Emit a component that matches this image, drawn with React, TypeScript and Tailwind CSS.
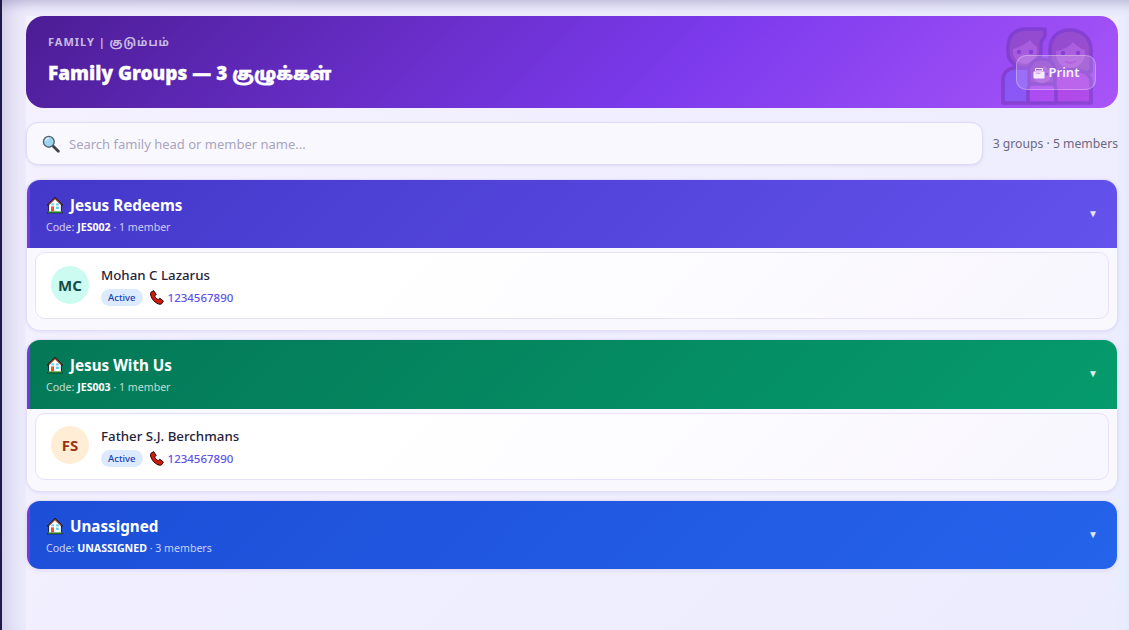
const font = { fontFamily: '"Noto Sans", "Noto Sans Tamil", sans-serif' };

function House() {
  return (
    <svg width="18" height="18" viewBox="0 0 18 18" className="shrink-0">
      <path d="M9 .8 L17.4 9.2 L15.6 9.6 L15.6 16 L16.8 16 L16.8 17.2 L1.2 17.2 L1.2 16 L2.4 16 L2.4 9.6 L.6 9.2 Z" fill="#17100e" />
      <path d="M9 1.9 L16 8.7 L14.8 8.8 L9 3.4 L3.2 8.8 L2 8.7 Z" fill="#c4502c" />
      <path d="M9 3.6 L14.9 9 L14.9 15.7 L3.1 15.7 L3.1 9 Z" fill="#ffffff" />
      <rect x="1.8" y="15.5" width="14.4" height="1.1" fill="#37b337" />
      <rect x="5" y="10.4" width="3" height="5.1" fill="#ee5430" />
      <rect x="5.4" y="7.4" width="2.6" height="2" fill="#63d3f5" />
      <rect x="10" y="7.4" width="2.8" height="2" fill="#63d3f5" />
      <rect x="10" y="10.6" width="2.8" height="2.4" fill="#63d3f5" />
    </svg>
  );
}

function Phone() {
  return (
    <svg width="14" height="15" viewBox="0 0 14 15" className="shrink-0">
      <path
        d="M.8 2.4 L3.6 .6 L6.2 4.4 L4.6 6 C5.4 7.8 6.6 9 8.2 9.6 L9.8 8.2 L13.4 11 L11.6 13.8 C10.8 14.4 9.4 14.4 8 13.8 C4.2 12.2 1.6 9 .6 5 C.4 4 .4 3 .8 2.4 Z"
        fill="#d3180c"
        stroke="#2a0808"
        strokeWidth="1"
        strokeLinejoin="round"
      />
    </svg>
  );
}

function Lens() {
  return (
    <svg width="18" height="18" viewBox="0 0 18 18" className="shrink-0">
      <line x1="10.5" y1="10.5" x2="16.3" y2="16.3" stroke="#3d4347" strokeWidth="2.8" strokeLinecap="round" />
      <circle cx="6.8" cy="6.8" r="5.4" fill="#9fd3f2" stroke="#56666f" strokeWidth="1.4" />
      <path d="M3.6 6 A3.6 3.6 0 0 1 7 3" fill="none" stroke="#e3f5ff" strokeWidth="1.2" />
    </svg>
  );
}

function Printer() {
  return (
    <svg width="12" height="11" viewBox="0 0 12 11" className="shrink-0">
      <path d="M2.5 .5 H9.5 V3 H2.5 Z" fill="none" stroke="#f3e4ff" strokeWidth="1" />
      <rect x=".5" y="3.5" width="11" height="7" rx="1" fill="#f6ecff" />
      <rect x="2.5" y="4.6" width="5" height="1.2" fill="#c99cf0" />
    </svg>
  );
}

function Family() {
  return (
    <svg width="96" height="84" viewBox="0 0 96 84" className="opacity-[0.18]">
      <g stroke="#200a3c" strokeWidth="3.6" strokeLinejoin="round">
        {/* man */}
        <path d="M3 81 V58 C3 50 9 46 15 46 H32 V81 Z" fill="#3b82f6" />
        <path d="M8 26 C8 14 14 7 26 7 H45 V14 L41 20 V30 C41 38 34 46 25 46 C15 46 8 38 8 30 Z" fill="#7a4a2a" />
        <path d="M13 27 C20 25 26 22 30 18 C33 22 36 24 37 25 V30 C37 36 31 42 25 42 C18 42 13 36 13 30 Z" fill="#e5a47c" stroke="none" />
        {/* woman */}
        <path d="M50 28 C50 15 58 8 70 8 C82 8 91 16 91 28 V50 H50 Z" fill="#7a4a2a" />
        <path d="M56 29 C64 28 70 24 73 20 C77 24 81 27 85 28 V32 C85 40 78 46 70 46 C62 46 56 40 56 32 Z" fill="#e5a47c" stroke="none" />
        <path d="M50 81 V60 C50 52 58 48 70 48 C84 48 91 52 91 60 V81 Z" fill="#ec2fb0" />
        {/* girl */}
        <path d="M28 81 V68 C28 62 34 59 42 59 C50 59 56 62 56 68 V81 Z" fill="#e83fe0" />
        <path d="M29 50 C29 42 34 37 42 37 C50 37 55 42 55 50 V62 H29 Z" fill="#7a4a2a" />
        <path d="M33 50 C38 49 42 47 44 44 C47 47 49 49 51 49 V52 C51 58 47 61 42 61 C37 61 33 58 33 52 Z" fill="#e5a47c" stroke="none" />
      </g>
      <g fill="#200a3c">
        <circle cx="19" cy="30" r="2.2" />
        <circle cx="31" cy="30" r="2.2" />
        <circle cx="63" cy="31" r="2.2" />
        <circle cx="78" cy="31" r="2.2" />
        <circle cx="37" cy="52" r="1.6" />
        <circle cx="47" cy="52" r="1.6" />
      </g>
      <path d="M65 39 Q70.500 43 76 39" fill="none" stroke="#e0246e" strokeWidth="2" />
    </svg>
  );
}

type Member = { initials: string; name: string; avatar: string; color: string };

function GroupCard({
  title,
  code,
  count,
  header,
  member,
}: {
  title: string;
  code: string;
  count: string;
  header: string;
  member?: Member;
}) {
  return (
    <div className="mx-[1px] rounded-[13px] bg-[#faf8ff] shadow-[0_0_0_1px_#e4def8,0_1px_4px_rgba(90,70,180,0.16)] overflow-hidden">
      <div className={`h-[68.4px] border-l-[3px] border-l-[#6d3be0] ${header} pl-[16px] pr-[19px] pt-[14px] flex justify-between`}>
        <div>
          <div className="flex items-center gap-[6px] h-[22px] text-white text-[15.2px] font-bold leading-[22px]">
            <House />
            <span>{title}</span>
          </div>
          <div className="mt-[3px] text-[10.6px] leading-[16px] text-white/75">
            Code: <b className="text-white font-bold">{code}</b> · {count}
          </div>
        </div>
        <div className="text-[10px] text-white/85 mt-[12px]">▼</div>
      </div>
      {member && (
        <div className="px-[8px] pt-[4px] pb-[11px]">
          <div className="h-[67px] rounded-[10px] border border-[#e7e1fb] bg-[linear-gradient(135deg,#ffffff_30%,#f8f6fe)] flex items-center pl-[15px] gap-[12px]">
            <div className={`w-[38px] h-[38px] mb-[2px] rounded-full flex items-center justify-center text-[15px] font-bold ${member.avatar} ${member.color}`}>
              {member.initials}
            </div>
            <div>
              <div className="text-[13.3px] font-medium leading-[20px] text-[#26233a]">{member.name}</div>
              <div className="flex items-center gap-[7px] mt-[4px]">
                <span className="h-[17px] px-[7px] rounded-full bg-[#dbeafe] text-[#1e40af] text-[9.5px] font-medium leading-[17px]">Active</span>
                <Phone />
                <span className="text-[11.5px] font-medium text-[#6152ea] -ml-[3px]">1234567890</span>
              </div>
            </div>
          </div>
        </div>
      )}
    </div>
  );
}

export default function App() {
  return (
    <div
      style={font}
      className="h-[630px] w-[1129px] overflow-hidden flex bg-[linear-gradient(135deg,#f0ecfd,#e8edfe)] shadow-[inset_0_12px_12px_-8px_rgba(60,55,120,0.28),inset_26px_0_22px_-18px_rgba(60,50,130,0.18)]"
    >
      <div className="w-[2px] bg-[#1e1b4b] shrink-0" />
      <div className="flex-1 pl-[24px] pr-[11px] pt-[16px] flex">
        <main className="flex-1 flex flex-col bg-[linear-gradient(135deg,#f5f1ff,#ebecfe)]">
          <div className="relative h-[92px] shrink-0 rounded-[18px] bg-[linear-gradient(135deg,#4c1d95,#7c3aed_60%,#a855f7)] px-[22px] pt-[19px] overflow-hidden">
            <div className="text-[11px] font-bold leading-[14px] tracking-[1px] text-white/70">FAMILY | குடும்பம்</div>
            <div className="mt-[11px] text-[19px] font-black leading-[26px] text-white [-webkit-text-stroke:0.3px_white]">
              Family Groups — 3 <span className="text-[17.4px]">குழுக்கள்</span>
            </div>
            <div className="absolute left-[974px] top-[6px]">
              <Family />
            </div>
            <button className="absolute right-[22px] top-[39px] h-[35px] w-[80px] pt-[1px] rounded-[10px] border border-white/30 bg-white/15 flex items-center justify-center gap-[4px] text-white/90 text-[13px] font-semibold">
              <Printer />
              Print
            </button>
          </div>
          <div className="flex items-center gap-[10px] mt-[14px] mb-[15px]">
            <div className="flex-1 h-[43px] rounded-[12px] border border-[#e0d9f7] bg-[#faf8ff] flex items-center pl-[15px] gap-[9px] shadow-[0_1px_3px_rgba(90,70,180,0.12)]">
              <Lens />
              <span className="text-[13px] text-[#a8a5bd] mt-[2px]">Search family head or member name...</span>
            </div>
            <span className="shrink-0 text-[12.2px] text-[#6b6880] mt-[1px]">3 groups · 5 members</span>
          </div>
          <div className="flex flex-col gap-[10px]">
            <GroupCard
              title="Jesus Redeems"
              code="JES002"
              count="1 member"
              header="bg-[linear-gradient(135deg,#4338ca,#6352ec)]"
              member={{ initials: "MC", name: "Mohan C Lazarus", avatar: "bg-[#ccfbf1]", color: "text-[#134e4a]" }}
            />
            <GroupCard
              title="Jesus With Us"
              code="JES003"
              count="1 member"
              header="bg-[linear-gradient(135deg,#047857,#059b6c)]"
              member={{ initials: "FS", name: "Father S.J. Berchmans", avatar: "bg-[#ffedd5]", color: "text-[#9a3412]" }}
            />
            <GroupCard title="Unassigned" code="UNASSIGNED" count="3 members" header="bg-[linear-gradient(135deg,#1d4ed8,#2563eb)]" />
          </div>
        </main>
      </div>
    </div>
  );
}
